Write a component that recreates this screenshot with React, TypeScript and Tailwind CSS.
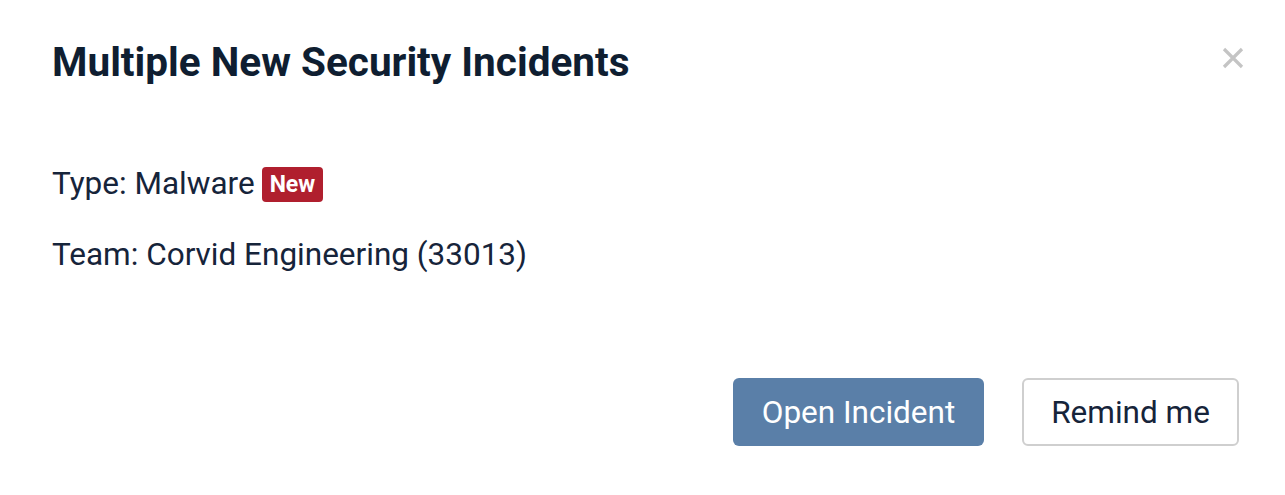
import React from "react";

export default function App() {
  return (
    <div className="w-[1285px] h-[495px] bg-white flex flex-col" style={{ fontFamily: "Roboto, 'Noto Sans', sans-serif" }}>
      <div className="flex items-start justify-between pl-[52px] pr-[40px] pt-[38px]">
        <h1 className="text-[40.5px] leading-[48px] font-bold text-[#0f1e31]">Multiple New Security Incidents</h1>
        <button className="mt-[8px] text-[#c4c4c4]">
          <svg width="24" height="24" viewBox="0 0 24 24" fill="none" stroke="currentColor" strokeWidth="3.2" strokeLinecap="butt">
            <path d="M3 3L21 21M21 3L3 21" />
          </svg>
        </button>
      </div>
      <div className="pl-[52px] pt-[80px] flex flex-col gap-[35px] text-[31.5px] leading-[36px] text-[#16243a]">
        <div className="flex items-center gap-[7px]">
          <span>Type: Malware</span>
          <span className="bg-[#b01f2e] text-white font-bold text-[23px] leading-[35px] px-[8px] rounded-[4px]">New</span>
        </div>
        <div>Team: Corvid Engineering (33013)</div>
      </div>
      <div className="flex-1" />
      <div className="flex justify-end gap-[38px] pr-[46px] pb-[49px]">
        <button className="w-[251px] h-[68px] pt-[2px] rounded-[6px] bg-[#5a7fa8] text-white text-[31.5px]">Open Incident</button>
        <button className="w-[217px] h-[68px] pt-[2px] rounded-[6px] border-2 border-[#cfcfcf] bg-white text-[#16243a] text-[31.5px]">Remind me</button>
      </div>
    </div>
  );
}
